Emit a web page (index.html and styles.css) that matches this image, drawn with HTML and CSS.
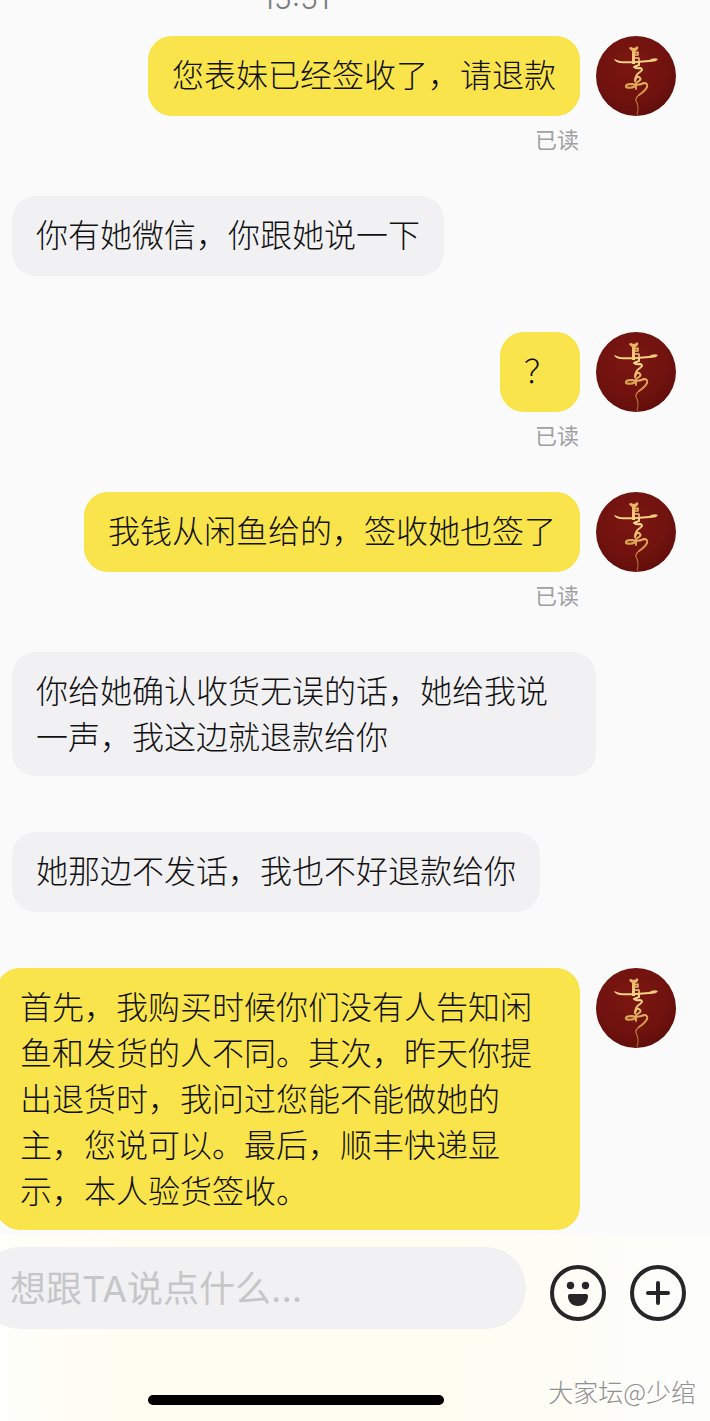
FILE: index.html
```html
<!DOCTYPE html>
<html lang="zh-CN">
<head>
    <meta charset="UTF-8">
    <meta name="viewport" content="width=device-width, initial-scale=1.0">
    <title>聊天</title>
    <link rel="stylesheet" href="styles.css">
</head>
<body>
    <!-- shared avatar drawing -->
    <svg class="defs" width="0" height="0" aria-hidden="true">
        <defs>
            <radialGradient id="red" cx="45%" cy="35%" r="75%">
                <stop offset="0" stop-color="#7c1712"/>
                <stop offset="0.6" stop-color="#70120e"/>
                <stop offset="1" stop-color="#5a0d0a"/>
            </radialGradient>
            <linearGradient id="gold" x1="0" y1="0" x2="0" y2="80" gradientUnits="userSpaceOnUse">
                <stop offset="0.1" stop-color="#e3ab58"/>
                <stop offset="0.4" stop-color="#f8dc90"/>
                <stop offset="0.65" stop-color="#d9a04f"/>
                <stop offset="1" stop-color="#a4532f"/>
            </linearGradient>
        </defs>
        <symbol id="avatar" viewBox="0 0 80 80">
            <circle cx="40" cy="40" r="40" fill="url(#red)"/>
            <path fill="url(#gold)" d="M33 12q2-2 4 0 3 0 4-2 2 1 1 3l-3 3v12h-3V15q-2-1-3-3z"/>
            <path fill="url(#gold)" d="M18 23q3 1 6 2 8 1 29-1 5-3 9-1-1 3-9 3-20 2-29 1-5-1-6-4z"/>
            <g fill="none" stroke="url(#gold)" stroke-linecap="round" stroke-linejoin="round">
                <path stroke-width="1.500" d="M39 17l3-1v3h-3M39 22h4v3"/>
                <path stroke-width="2" d="M43 26v3l-5 2q3 2 6 1 4 1 0 4-5 3-5 9"/>
                <path stroke-width="2" d="M39 45q1-5 4-4 3 2 0 4l-3 2v6"/>
                <path stroke-width="2" d="M40 50q-6 3-10 1-1-3 6-3 6 2 12-1 4 0 3 4-2 4-8 8"/>
                <path stroke-width="1.200" d="M43 59q-5 4-2 8 2 5 0 12"/>
            </g>
        </symbol>
    </svg>

    <main class="chat">
        <time class="chat-time">15:51</time>

        <div class="message sent">
            <div class="content">
                <p class="bubble">您表妹已经签收了，请退款</p>
                <span class="read">已读</span>
            </div>
            <svg class="avatar"><use href="#avatar"/></svg>
        </div>

        <div class="message">
            <p class="bubble">你有她微信，你跟她说一下</p>
        </div>

        <div class="message sent">
            <div class="content">
                <p class="bubble">？</p>
                <span class="read">已读</span>
            </div>
            <svg class="avatar"><use href="#avatar"/></svg>
        </div>

        <div class="message sent">
            <div class="content">
                <p class="bubble">我钱从闲鱼给的，签收她也签了</p>
                <span class="read">已读</span>
            </div>
            <svg class="avatar"><use href="#avatar"/></svg>
        </div>

        <div class="message">
            <p class="bubble">你给她确认收货无误的话，她给我说一声，我这边就退款给你</p>
        </div>

        <div class="message">
            <p class="bubble">她那边不发话，我也不好退款给你</p>
        </div>

        <div class="message sent">
            <div class="content">
                <p class="bubble">首先，我购买时候你们没有人告知闲鱼和发货的人不同。其次，昨天你提出退货时，我问过您能不能做她的主，您说可以。最后，顺丰快递显示，本人验货签收。</p>
            </div>
            <svg class="avatar"><use href="#avatar"/></svg>
        </div>
    </main>

    <footer class="composer">
        <form class="composer-row">
            <input class="composer-input" type="text" aria-label="消息" placeholder="想跟TA说点什么...">
            <button class="icon-btn" type="button" aria-label="表情">
                <svg viewBox="0 0 56 56">
                    <circle cx="28" cy="28" r="26" fill="none" stroke="#262628" stroke-width="4"/>
                    <circle cx="20.500" cy="20.500" r="3.700" fill="#262628"/>
                    <circle cx="35.500" cy="20.500" r="3.700" fill="#262628"/>
                    <path fill="#262628" d="M20 29h16q2 0 2 2c0 6-4 10-10 10s-10-4-10-10q0-2 2-2z"/>
                </svg>
            </button>
            <button class="icon-btn" type="button" aria-label="更多">
                <svg viewBox="0 0 56 56" fill="none" stroke="#262628" stroke-width="4" stroke-linecap="round">
                    <circle cx="28" cy="28" r="26"/>
                    <path d="M18 28h20M28 18v20"/>
                </svg>
            </button>
        </form>
        <div class="home-bar"></div>
        <span class="watermark">大家坛@少绾</span>
    </footer>
</body>
</html>
```
FILE: styles.css
```css
* {
    margin: 0;
    padding: 0;
    box-sizing: border-box;
}

body {
    font-family: 'Noto Sans CJK SC', sans-serif;
    font-weight: 300;
    background: #fafafb;
    color: #111;
    min-height: 100vh;
    display: flex;
    flex-direction: column;
    overflow-x: hidden;
}

.defs {
    position: absolute;
}

.chat {
    flex: 1;
    padding: 0 34px 4px 12px;
    overflow: hidden;
}

.chat-time {
    display: block;
    margin: -22px 96px 18px 0;
    text-align: center;
    font-family: Inter, sans-serif;
    font-size: 30px;
    font-weight: 300;
    line-height: 40px;
    color: #7c7c7f;
}

/* messages */
.message {
    display: flex;
    margin-bottom: 56px;
}

.message.sent {
    justify-content: flex-end;
    gap: 16px;
    margin-bottom: 40px;
}

.message:last-child {
    margin-bottom: 0;
}

.content {
    display: flex;
    flex-direction: column;
    align-items: flex-end;
    flex-shrink: 0;
    max-width: 584px;
}

.bubble {
    max-width: 584px;
    min-height: 80px;
    padding: 14px 24px 18px;
    border-radius: 24px;
    background: #f1f1f4;
    font-size: 32px;
    line-height: 46px;
}

.sent .bubble {
    background: #f9e54b;
}

.read {
    margin: 6px 1px 2px 0;
    font-size: 22px;
    font-weight: 400;
    line-height: 32px;
    color: #a0a0a3;
}

.avatar {
    width: 80px;
    height: 80px;
    flex-shrink: 0;
}

/* bottom input area */
.composer {
    position: relative;
    padding: 13px 24px 16px 0;
    background: linear-gradient(90deg, #fefefa 0%, #fefdf1 20%, #fefdf1 60%, #fdfdfc 100%);
}

.composer-row {
    display: flex;
    align-items: flex-end;
    gap: 24px;
    margin: 0 0 66px -20px;
}

.composer-input {
    flex: 1;
    min-width: 0;
    height: 82px;
    padding: 2px 30px 0;
    border: none;
    border-radius: 40px;
    outline: none;
    background: #f1f1f4;
    font-family: Inter, 'Noto Sans CJK SC', sans-serif;
    font-size: 36px;
    font-weight: 400;
    color: #111;
}

.composer-input::placeholder {
    color: #c6c6c9;
    opacity: 1;
}

.icon-btn {
    width: 56px;
    height: 56px;
    margin-bottom: 8px;
    border: none;
    background: none;
    cursor: pointer;
}

.icon-btn svg {
    display: block;
}

.home-bar {
    width: 296px;
    height: 10px;
    margin-left: 148px;
    border-radius: 5px;
    background: #000;
}

.watermark {
    position: absolute;
    right: 14px;
    bottom: 13px;
    font-size: 25px;
    line-height: 34px;
    color: #909090;
    text-shadow: 1px 1px 0 #fff;
}
```
